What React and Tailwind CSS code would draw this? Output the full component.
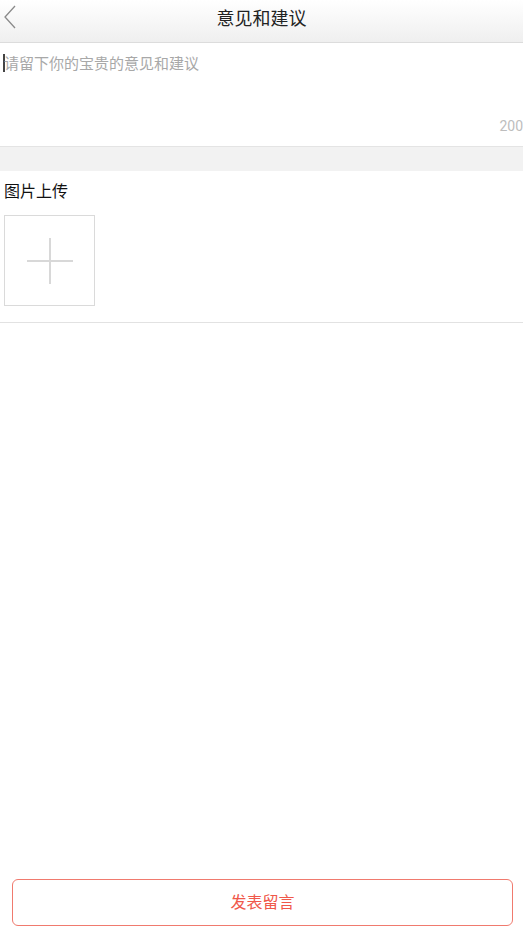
export default function App() {
  const font = { fontFamily: '"Noto Sans CJK SC", "Noto Sans", sans-serif' };
  return (
    <div className="w-[523px] h-[938px] bg-white flex flex-col" style={font}>
      <div className="h-[43px] shrink-0 relative flex items-center justify-center pb-[9px] bg-gradient-to-b from-white to-[#efefef] border-b border-[#dcdcdc]">
        <svg className="absolute left-[3px] top-[5px]" width="14" height="24" viewBox="0 0 14 24">
          <path d="M12 1 L2 12 L12 23" fill="none" stroke="#8a8a8a" strokeWidth="1.3" />
        </svg>
        <span className="text-[18px] text-[#222] leading-none">意见和建议</span>
      </div>
      <div className="h-[104px] shrink-0 relative border-b border-[#e4e4e4]">
        <div className="flex items-center pt-[10px] pl-[3px]">
          <span className="w-[2px] h-[18px] bg-[#444]"></span>
          <span className="-ml-[1px] text-[15px] text-[#a8a8a8] leading-[20px]">请留下你的宝贵的意见和建议</span>
        </div>
        <span className="absolute right-0 bottom-[13px] text-[14px] text-[#bdbdbd] leading-none" style={{ fontFamily: 'Roboto, sans-serif' }}>200</span>
      </div>
      <div className="h-[24px] shrink-0 bg-[#f2f2f2]"></div>
      <div className="border-b border-[#e2e2e2] pb-[16px]">
        <div className="pl-[4px] pt-[9px] text-[16px] text-[#111] leading-[20px]">图片上传</div>
        <div className="ml-[4px] mt-[15px] w-[91px] h-[91px] border border-[#dadada] flex items-center justify-center">
          <svg width="46" height="46" viewBox="0 0 46 46">
            <line x1="23" y1="0" x2="23" y2="46" stroke="#d8d8d8" strokeWidth="2" />
            <line x1="0" y1="23" x2="46" y2="23" stroke="#d8d8d8" strokeWidth="2" />
          </svg>
        </div>
      </div>
      <div className="flex-1"></div>
      <div className="pl-[12px] pr-[10px] pb-[12px]">
        <div className="h-[47px] border border-[#f07a6e] rounded-[6px] flex items-center justify-center pb-[4px] text-[16px] text-[#f0584a]">
          发表留言
        </div>
      </div>
    </div>
  );
}
